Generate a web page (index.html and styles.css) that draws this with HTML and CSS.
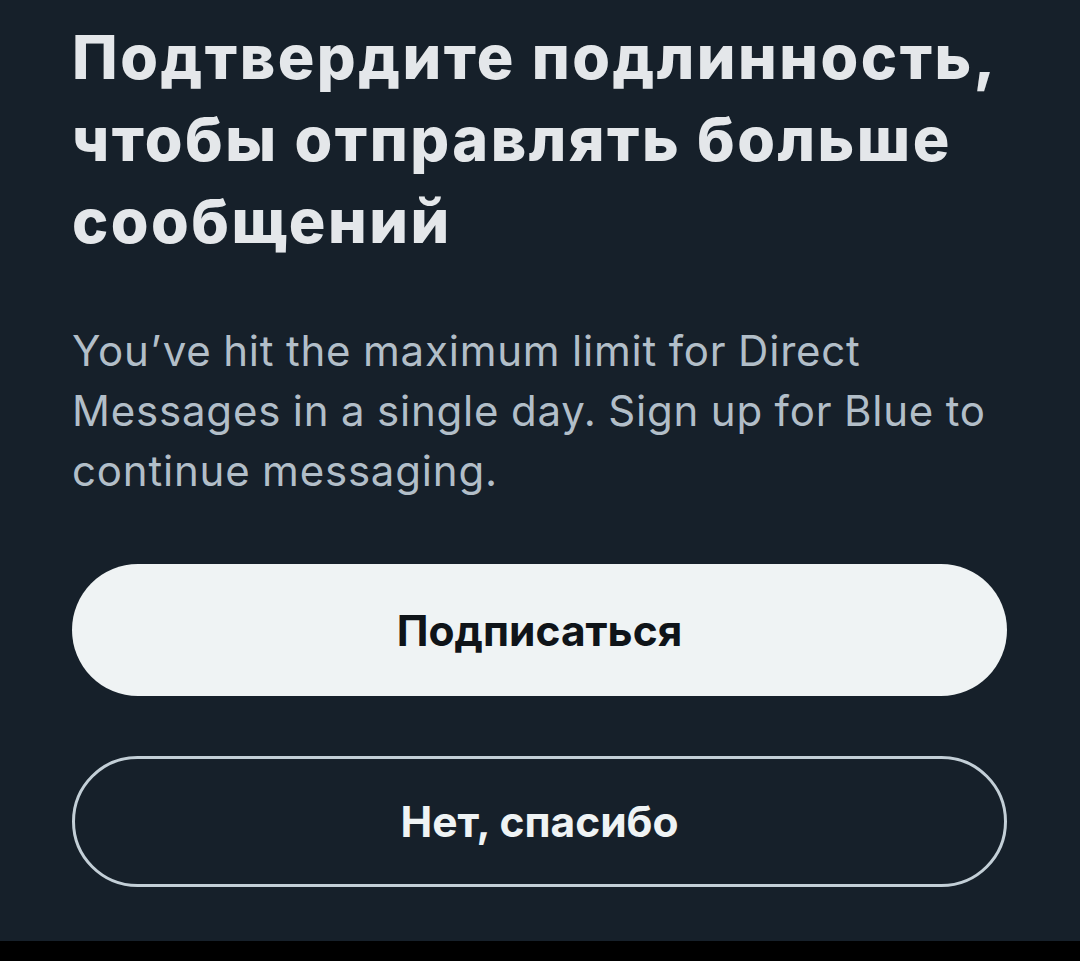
FILE: index.html
```html
<!DOCTYPE html>
<html lang="ru">
<head>
<meta charset="utf-8">
<link rel="stylesheet" href="styles.css">
</head>
<body>
<div class="sheet">
  <h1 class="title">Подтвердите подлинность, чтобы отправлять больше сообщений</h1>
  <p class="desc">You’ve hit the maximum limit for Direct Messages in a single day. Sign up for Blue to continue messaging.</p>
  <div class="actions">
    <button class="btn btn-primary">Подписаться</button>
    <button class="btn btn-outline">Нет, спасибо</button>
  </div>
</div>
<div class="navbar"></div>
</body>
</html>
```
FILE: styles.css
```css
html, body {
  margin: 0;
  padding: 0;
  background: #000;
}
body {
  width: 1080px;
  height: 961px;
  overflow: hidden;
  font-family: Inter, "Liberation Sans", sans-serif;
}
.sheet {
  height: 941px;
  box-sizing: border-box;
  background: #16202a;
  padding: 16px 73px 0 72px;
  display: flex;
  flex-direction: column;
}
.title {
  margin: 0;
  font-size: 61px;
  line-height: 82px;
  font-weight: 800;
  letter-spacing: 2.5px;
  color: #e4e7ea;
}
.desc {
  margin: 59px 0 0;
  font-size: 42px;
  line-height: 60px;
  font-weight: 400;
  letter-spacing: 0.8px;
  word-spacing: -1px;
  color: #b2bec8;
}
.actions {
  margin-top: 63px;
  display: flex;
  flex-direction: column;
  gap: 60px;
}
.btn {
  height: 132px;
  border-radius: 66px;
  font-family: inherit;
  font-size: 42.5px;
  font-weight: 700;
  display: flex;
  align-items: center;
  justify-content: center;
  box-sizing: border-box;
  cursor: pointer;
}
.btn-primary {
  background: #eff3f4;
  color: #0f1419;
  border: none;
}
.btn-outline {
  background: transparent;
  color: #eff3f4;
  border: 3px solid #c3cfd7;
  height: 131px;
}
.navbar {
  height: 20px;
  background: #000;
}
```
